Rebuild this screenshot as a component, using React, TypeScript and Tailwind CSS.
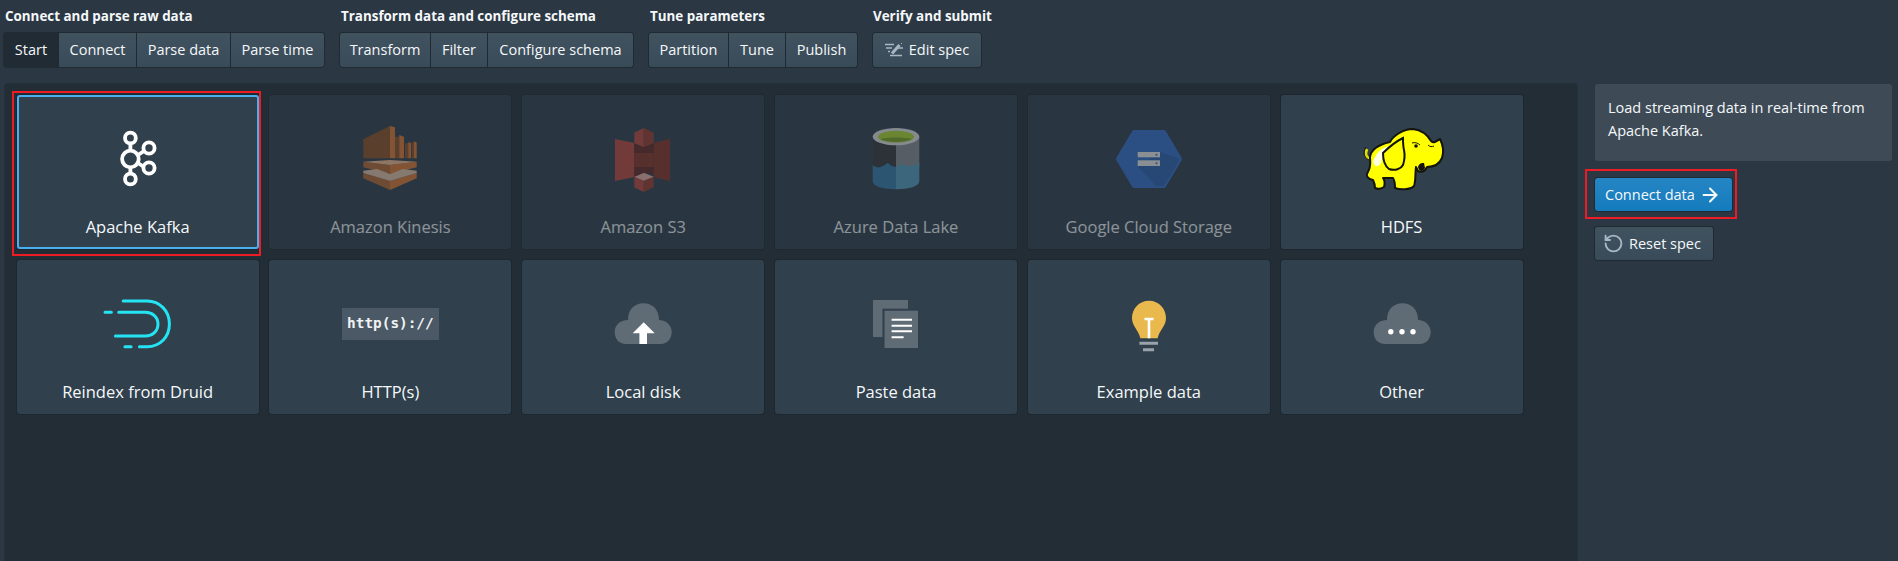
import { ArrowRight, RotateCcw } from "lucide-react";
import type { ReactNode } from "react";

const steps = [
  {
    label: "Connect and parse raw data",
    width: "w-[320px]",
    items: [
      { title: "Start", w: "w-[55px]", active: true },
      { title: "Connect", w: "w-[78px]" },
      { title: "Parse data", w: "w-[94px]" },
      { title: "Parse time", w: "w-[93px]" },
    ],
  },
  {
    label: "Transform data and configure schema",
    width: "w-[293px]",
    items: [
      { title: "Transform", w: "w-[91px]" },
      { title: "Filter", w: "w-[57px]" },
      { title: "Configure schema", w: "w-[145px]" },
    ],
  },
  {
    label: "Tune parameters",
    width: "w-[208px]",
    items: [
      { title: "Partition", w: "w-[80px]" },
      { title: "Tune", w: "w-[57px]" },
      { title: "Publish", w: "w-[71px]" },
    ],
  },
];

function KafkaIcon() {
  return (
    <svg viewBox="0 0 80 80" className="h-20 w-20" fill="none" stroke="#fff" strokeWidth="3.8">
      <path d="M32.400 26V31M32.400 49V54M40 36l6-4M40 44l6 4" />
      <circle cx="32.400" cy="19" r="5.400" />
      <circle cx="32.400" cy="40" r="8.300" />
      <circle cx="32.400" cy="60" r="5.400" />
      <circle cx="51" cy="29" r="5.600" />
      <circle cx="51" cy="49" r="5.600" />
    </svg>
  );
}

function KinesisIcon() {
  return (
    <svg viewBox="0 0 80 80" className="h-20 w-20">
      <path fill="#945226" d="M13.300 20.300 40 7v32.300H13.300z" />
      <path fill="#e07c34" d="M40 7l5 1.300v31h-5z" />
      <path fill="#945226" d="M45 17.700h4.300v21.600H45zM55 24.300h3.300v15H55zM61.700 23.300H64v16h-2.300z" />
      <path fill="#e07c34" d="M49.300 16l4.700 1.700v21.600h-4.700zM58.300 23l2.700 1.300v15h-2.700zM64 22.500l2.700 .8v16H64z" />
      <path fill="#b86a30" d="M13.300 42.700 40 46v9l-26.700-6.700z" />
      <path fill="#e07c34" d="M40 46l26.700-3.300v5.600L40 55z" />
      <path fill="#fbbf93" d="M13.300 42.700 40 41l26.700 1.700L40 46z" />
      <path fill="#b86a30" d="M13.300 54 40 62v9L13.300 59.300z" />
      <path fill="#e07c34" d="M40 62l26.700-8v5.300L40 71z" />
      <path fill="#e8c4a8" d="M13.300 51.700 27 50l13 5 13-5 13.700 1.700V54L40 62 13.300 54z" />
    </svg>
  );
}

function S3Icon() {
  return (
    <svg viewBox="0 0 80 80" className="h-20 w-20">
      <path fill="#c04a3e" d="M12 20l19.300 4v34L12 62z" />
      <path fill="#8c3123" d="M67 20l-16.300 4v34L67 62z" />
      <path fill="#8c3123" d="M31.300 34h19.400v14H31.300z" />
      <path fill="#c04a3e" d="M31.300 13.700 40.700 9v19.300l-9.400-4z" />
      <path fill="#a03c30" d="M50.700 13.700 40.700 9v19.300l10-4z" />
      <path fill="#6a2620" d="M31.300 24.300 40.700 28.300l10-4V34H31.300z" />
      <path fill="#c04a3e" d="M31.300 57.700l9.400 4V73l-9.400-4.700z" />
      <path fill="#a03c30" d="M50.700 57.700l-10 4V73l10-4.700z" />
      <path fill="#f2b0a9" d="M31.300 57.700 40.700 53.700l10 4-10 4z" />
      <path fill="#6a2620" d="M31.300 48h19.400v7l-9.700-1.300-9.700 4z" />
    </svg>
  );
}

function AzureIcon() {
  return (
    <svg viewBox="0 0 80 80" className="h-20 w-20">
      <path fill="#38363a" d="M16.700 18H40v30H16.700z" />
      <path fill="#8a8e92" d="M40 18h23.300v30H40z" />
      <path fill="#347eac" d="M16.700 46c3 3 7 3 10 1 3-1 4-3 5-3s2 2 4 3l4.300 1V70.300c-13 0-23.300-3-23.300-8z" />
      <path fill="#54a0c0" d="M40 48l5-3c2-1 3 2 6 2s6 0 12.300-3v18.300c0 5-10.300 8-23.300 8z" />
      <ellipse cx="40" cy="17.700" rx="23.300" ry="8.600" fill="#e4e6e6" />
      <ellipse cx="40" cy="17.700" rx="18" ry="6" fill="#b0de2c" />
      <path fill="#7fa822" d="M24 20c4 2 9 3 16 3s12-1 16-3c-4-1-9-1.500-16-1.500S28 19 24 20z" />
    </svg>
  );
}

function GcsIcon() {
  return (
    <svg viewBox="0 0 80 80" className="h-20 w-20">
      <path fill="#3472d0" stroke="#3472d0" strokeWidth="4" strokeLinejoin="round" d="M25 13h30l16 27-16 27H25L9 40z" />
      <path fill="#2c62b4" d="M51 33l20 7-16 27H47l-18-19z" />
      <rect x="28.700" y="33" width="22.300" height="5.300" fill="#f0f0f0" />
      <rect x="28.700" y="41.300" width="22.300" height="5.700" fill="#f0f0f0" />
      <circle cx="47.500" cy="35.700" r="1" fill="#3472d0" />
      <circle cx="47.500" cy="44.200" r="1" fill="#3472d0" />
    </svg>
  );
}

function HdfsIcon() {
  return (
    <svg viewBox="0 0 80 80" className="h-20 w-20 overflow-visible">
      <path fill="none" stroke="#e0e000" strokeWidth="3" d="M8 40C3 38 3 34 5 30" />
      <path fill="none" stroke="#14140c" strokeWidth="1" d="M10 42C1 40 1 33 4 28" />
      <path
        fill="#ffff00"
        stroke="#14140c"
        strokeWidth="2"
        strokeLinejoin="round"
        d="M8 38C9 31 15 26 28 23C31 17 41 10 51 10C59 11 65 15 69 22C71 25 75 22 78 20C81 26 82 33 80 39C77 46 71 48 65 48C63 52 60 54 56 52L54 48C53 54 54 62 52 67C48 71 38 71 33 69C33 65 33 62 31 59H21C23 62 23 65 22 68C19 70 15 70 13 69C13 65 12 63 11 61C7 60 4 58 5 55C7 51 9 48 8 38Z"
      />
      <path fill="#ffffe0" d="M11 43C13 35 19 29 27 27C24 32 20 38 19 44C17 48 12 48 11 43Z" />
      <path
        fill="#ffff00"
        stroke="#14140c"
        strokeWidth="2"
        d="M41 19C33 23 26 29 21 34C21 41 23 47 27 50C33 52 39 50 41 46C43 40 43 36 42 31C41 27 41 23 41 19Z"
      />
      <circle cx="54" cy="27" r="1.800" fill="#14140c" />
      <path fill="#14140c" d="M56 48C57 44 60 44 62 44L63 49C61 53 57 53 56 48Z" />
      <path fill="none" stroke="#14140c" strokeWidth="1" d="M50 24C53 23 56 24 58 26M66 26C68 28 70 28 72 27" />
    </svg>
  );
}

function DruidIcon() {
  return (
    <svg viewBox="0 0 80 80" className="h-20 w-20" fill="none" stroke="#24e4f3" strokeWidth="3" strokeLinecap="round">
      <path d="M25.200 17H49C62 17 71.400 27 71.400 40C71.400 53 62 62.700 49 62.700H41.400" />
      <path d="M20.700 28.300H47.400C54.600 28.300 60 33 60 40C60 47 54.600 52 47.400 52H17.400" />
      <path d="M7 28.300H13.400M26.900 62.700H33.100" />
    </svg>
  );
}

function HttpIcon() {
  return (
    <div className="flex h-20 w-20 items-center justify-center">
      <div className="flex h-8 w-[97px] shrink-0 items-center justify-center bg-[#4a5965] font-['DejaVu_Sans_Mono',monospace] text-[14.400px] font-bold text-[#f0f2f4]">
        http(s)://
      </div>
    </div>
  );
}

function CloudShape({ children }: { children: ReactNode }) {
  return (
    <svg viewBox="0 0 80 80" className="h-20 w-20">
      <path
        fill="#5f6b75"
        d="M23 60C16 60 11.700 55 11.700 48C11.700 41 17 36 25 36C25 26 31 19.300 40.500 19.300C50 19.300 56 26 56 36C63 36 68.700 41 68.700 48C68.700 55 64 60 58 60Z"
      />
      {children}
    </svg>
  );
}

function LocalIcon() {
  return (
    <CloudShape>
      <path fill="#fff" d="M40.700 38.300L51.700 49.300H44V60H36.400V49.300H29.700Z" />
    </CloudShape>
  );
}

function OtherIcon() {
  return (
    <CloudShape>
      <circle cx="28.800" cy="47.700" r="2.700" fill="#fff" />
      <circle cx="40" cy="47.700" r="2.700" fill="#fff" />
      <circle cx="51" cy="47.700" r="2.700" fill="#fff" />
    </CloudShape>
  );
}

function PasteIcon() {
  return (
    <svg viewBox="0 0 80 80" className="h-20 w-20">
      <rect x="17" y="16" width="35" height="37" fill="#5f6b75" />
      <rect x="26.500" y="24.700" width="37.500" height="41.300" fill="#303f4d" />
      <rect x="28.500" y="26.700" width="33.500" height="37.300" fill="#5f6b75" />
      <path stroke="#fff" strokeWidth="2" d="M35.600 35.700H56M35.600 41.700H56M35.600 47.300H56M35.600 53.300H47.600" />
    </svg>
  );
}

function BulbIcon() {
  return (
    <svg viewBox="0 0 80 80" className="h-20 w-20">
      <path
        fill="#eab94e"
        d="M40 16.700C30 16.700 23 25 23 34C23 42 29 45 31.400 54.300H48.600C51 45 57 42 57 34C57 25 50 16.700 40 16.700Z"
      />
      <path stroke="#fff" strokeWidth="2.600" d="M35.500 35H44.500M40 34.300V54.300" />
      <path stroke="#9aa3ab" strokeWidth="3" d="M30.400 59.300H49M34 65.700H45" />
    </svg>
  );
}

const tiles = [
  { title: "Apache Kafka", icon: <KafkaIcon />, selected: true },
  { title: "Amazon Kinesis", icon: <KinesisIcon />, disabled: true },
  { title: "Amazon S3", icon: <S3Icon />, disabled: true },
  { title: "Azure Data Lake", icon: <AzureIcon />, disabled: true },
  { title: "Google Cloud Storage", icon: <GcsIcon />, disabled: true },
  { title: "HDFS", icon: <HdfsIcon /> },
  { title: "Reindex from Druid", icon: <DruidIcon /> },
  { title: "HTTP(s)", icon: <HttpIcon /> },
  { title: "Local disk", icon: <LocalIcon /> },
  { title: "Paste data", icon: <PasteIcon /> },
  { title: "Example data", icon: <BulbIcon /> },
  { title: "Other", icon: <OtherIcon /> },
];

function EditSpecIcon() {
  return (
    <svg viewBox="0 0 18 14" className="h-[14px] w-[18px]" fill="none" stroke="#a7b6c2">
      <path strokeWidth="1.600" d="M0 1.500H9M1 5H7M3 8.500H5M5 12.500H17M12 5H18" />
      <path strokeWidth="3" d="M7 10.500L14.500 2" />
      <path strokeWidth="1" d="M16 1L17 0" />
    </svg>
  );
}

function Tile({ title, icon, selected, disabled }: { title: string; icon: ReactNode; selected?: boolean; disabled?: boolean }) {
  return (
    <div
      className={`relative flex h-[154px] flex-col items-center rounded-[3px] bg-[#30404d] pt-6 text-[16.500px] shadow-[0_0_0_1px_rgba(16,22,26,0.25)] ${
        selected ? "outline-2 -outline-offset-2 outline-[#48aff0]" : ""
      } ${disabled ? "opacity-50" : ""}`}
    >
      {icon}
      <div className="mt-[18px] leading-[20px] whitespace-nowrap text-[#f5f8fa]">{title}</div>
      {selected && <div className="absolute -top-[4px] -right-[2px] -bottom-[7px] -left-[5px] border-2 border-[#ed1c24]" />}
    </div>
  );
}

export default function App() {
  return (
    <div className="flex h-[561px] w-[1898px] flex-col overflow-hidden bg-[#2b3843] font-['Open_Sans',sans-serif] text-[14.500px] text-[#f5f8fa]">
      <header className="flex h-[84px] shrink-0 gap-4 pt-[7px] pl-1">
        {steps.map(step => (
          <div key={step.label} className={step.width}>
            <div className="h-[19px] pl-px text-[13.400px] leading-[19px] font-bold whitespace-nowrap">{step.label}</div>
            <div className="mt-[7px] flex h-[34px] overflow-hidden rounded-[3px] shadow-[0_0_0_1px_rgba(16,22,26,0.4)]">
              {step.items.map(item => (
                <div
                  key={item.title}
                  className={`flex items-center justify-center border-r border-[#1f2932] last:border-r-0 ${item.w} ${
                    item.active ? "bg-[#202b33]" : "bg-linear-to-b from-[#41525f] to-[#394b59]"
                  }`}
                >
                  {item.title}
                </div>
              ))}
            </div>
          </div>
        ))}
        <div className="w-[108px]">
          <div className="h-[19px] text-[13.400px] leading-[19px] font-bold whitespace-nowrap">Verify and submit</div>
          <div className="mt-[7px] flex h-[34px] items-center justify-center gap-[6px] rounded-[3px] bg-linear-to-b from-[#41525f] to-[#394b59] shadow-[0_0_0_1px_rgba(16,22,26,0.4)]">
            <EditSpecIcon />
            Edit spec
          </div>
        </div>
      </header>

      <div className="flex min-h-0 flex-1">
        <main className="ml-[5px] w-[1572px] rounded-t-[3px] bg-[#232d36] pt-[11px] pl-[11.600px] shadow-[0_0_0_1px_rgba(16,22,26,0.2)]">
          <div className="grid grid-cols-[repeat(6,242px)] gap-x-[10.800px] gap-y-[11px]">
            {tiles.map(t => (
              <Tile key={t.title} {...t} />
            ))}
          </div>
        </main>

        <aside className="ml-[18px] flex w-[297px] flex-col items-start">
          <div className="h-[77px] w-full rounded-[3px] bg-[#3e4b57] px-[13px] pt-[12px] leading-[23px]">
            Load streaming data in real-time from Apache Kafka.
          </div>
          <div className="relative mt-[17px] flex h-[33px] w-[137px] items-center gap-1 rounded-[3px] bg-linear-to-b from-[#2585c4] to-[#137cbd] pl-[10px] shadow-[0_0_0_1px_rgba(16,22,26,0.4)]">
            Connect data
            <ArrowRight size={22} strokeWidth={2.200} />
            <div className="absolute -top-[9px] -right-[5px] -bottom-[8px] -left-[10px] border-2 border-[#ed1c24]" />
          </div>
          <div className="mt-4 flex h-[33px] w-[118px] items-center gap-[5px] rounded-[3px] bg-linear-to-b from-[#41525f] to-[#394b59] pl-2 shadow-[0_0_0_1px_rgba(16,22,26,0.4)]">
            <RotateCcw size={21} color="#a7b6c2" strokeWidth={2.200} />
            Reset spec
          </div>
        </aside>
      </div>
    </div>
  );
}
